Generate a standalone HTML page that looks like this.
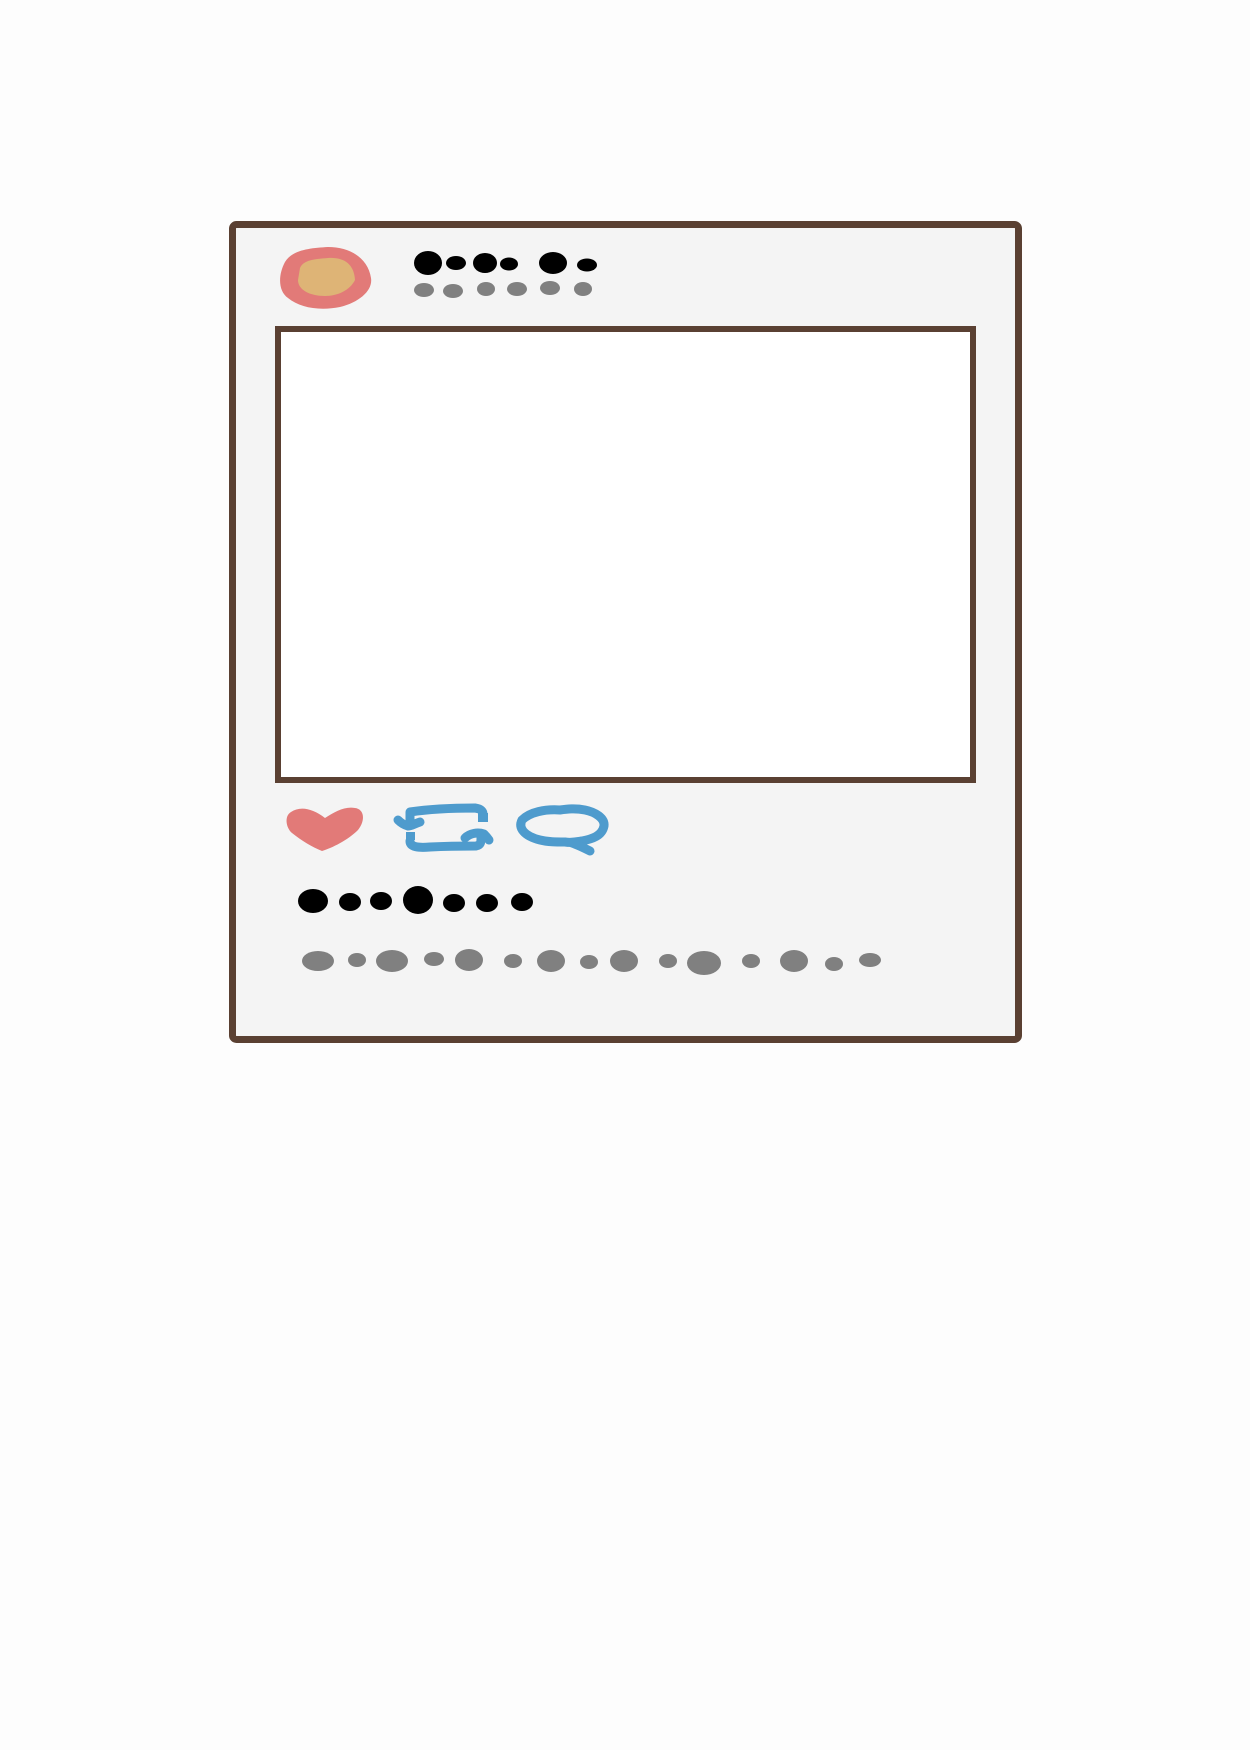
<!DOCTYPE html>
<html><head><meta charset="utf-8"><style>
html,body{margin:0;padding:0;background:#fdfdfd;width:1250px;height:1750px;overflow:hidden}
svg{display:block}
</style></head><body>
<svg width="1250" height="1750" viewBox="0 0 1250 1750" xmlns="http://www.w3.org/2000/svg">
<rect width="1250" height="1750" fill="#fdfdfd"/>
<rect x="232.5" y="224.5" width="786" height="815" rx="4" fill="#f4f4f4" stroke="#5a4032" stroke-width="7"/>
<path d="M285,262 C292,250 310,248 328,247 C350,247 368,258 371,278 C373,290 360,302 340,307 C320,311 300,308 288,298 C278,291 278,275 285,262 Z" fill="#e27a78"/>
<path d="M300,268 C303,260 315,259 328,258 C344,257 354,264 355,280 C350,290 338,296 325,296 C310,296 298,290 298,280 Z" fill="#deb476"/>
<g fill="#000">
<ellipse cx="428" cy="263" rx="14" ry="12"/>
<ellipse cx="456" cy="263" rx="10" ry="7"/>
<ellipse cx="485" cy="263" rx="12" ry="10"/>
<ellipse cx="509" cy="264" rx="9" ry="6.5"/>
<ellipse cx="553" cy="263" rx="14" ry="11"/>
<ellipse cx="587" cy="265" rx="10" ry="6.5"/>
</g>
<g fill="#808080">
<ellipse cx="424" cy="290" rx="10" ry="7"/>
<ellipse cx="453" cy="291" rx="10" ry="7"/>
<ellipse cx="486" cy="289" rx="9" ry="7"/>
<ellipse cx="517" cy="289" rx="10" ry="7"/>
<ellipse cx="550" cy="288" rx="10" ry="7"/>
<ellipse cx="583" cy="289" rx="9" ry="7"/>
</g>
<rect x="278" y="329" width="695" height="451" fill="#fff" stroke="#5a4032" stroke-width="6"/>
<path d="M325,818 C312,808 300,806 291,812 C284,816 286,828 292,833 C302,841 312,847 322,851 C332,848 348,840 358,830 C366,820 364,809 355,808 C345,806 334,812 325,818 Z" fill="#e27a78"/>
<g fill="none" stroke="#4e9bcd" stroke-width="9" stroke-linecap="round" stroke-linejoin="round">
<path d="M410,822 L410,812 C430,809 455,808 475,808 C482,809 483,812 483,814"/>
<path d="M420,822 C414,824 411,826 408,826 C404,825 400,822 398,820"/>
<path d="M410,841 C410,847 418,848 430,847 C450,846 470,846 476,846 C481,845 481,842 481,838"/>
<path d="M465,838 C470,833 478,832 484,834 C487,837 489,840 489,840"/>
</g>
<rect x="478" y="813" width="10" height="9" fill="#4e9bcd"/>
<rect x="406" y="832" width="9" height="8" fill="#4e9bcd"/>
<g fill="none" stroke="#4e9bcd" stroke-width="9" stroke-linecap="round" stroke-linejoin="round">
<path d="M560,810 C545,809 530,812 522,820 C518,828 524,836 540,840 C548,842 556,842 565,842 C572,843 576,842 582,841 C592,839 602,836 604,826 C605,818 595,812 585,810 C575,808 567,809 560,810 Z"/>
<path d="M572,843 C578,845 584,848 590,851"/>
</g>
<g fill="#000">
<ellipse cx="313" cy="901" rx="15" ry="12"/>
<ellipse cx="350" cy="902" rx="11" ry="9"/>
<ellipse cx="381" cy="901" rx="11" ry="9"/>
<ellipse cx="418" cy="900" rx="15" ry="14"/>
<ellipse cx="454" cy="903" rx="11" ry="9"/>
<ellipse cx="487" cy="903" rx="11" ry="9"/>
<ellipse cx="522" cy="902" rx="11" ry="9"/>
</g>
<g fill="#808080">
<ellipse cx="318" cy="961" rx="16" ry="10"/>
<ellipse cx="357" cy="960" rx="9" ry="7"/>
<ellipse cx="392" cy="961" rx="16" ry="11"/>
<ellipse cx="434" cy="959" rx="10" ry="7"/>
<ellipse cx="469" cy="960" rx="14" ry="11"/>
<ellipse cx="513" cy="961" rx="9" ry="7"/>
<ellipse cx="551" cy="961" rx="14" ry="11"/>
<ellipse cx="589" cy="962" rx="9" ry="7"/>
<ellipse cx="624" cy="961" rx="14" ry="11"/>
<ellipse cx="668" cy="961" rx="9" ry="7"/>
<ellipse cx="704" cy="963" rx="17" ry="12"/>
<ellipse cx="751" cy="961" rx="9" ry="7"/>
<ellipse cx="794" cy="961" rx="14" ry="11"/>
<ellipse cx="834" cy="964" rx="9" ry="7"/>
<ellipse cx="870" cy="960" rx="11" ry="7"/>
</g>
</svg>
</body></html>
